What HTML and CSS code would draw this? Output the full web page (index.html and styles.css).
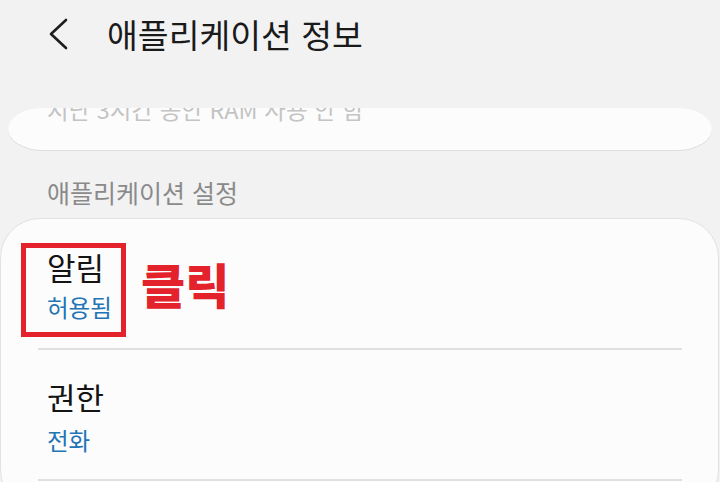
FILE: index.html
```html
<!DOCTYPE html>
<html lang="ko">
<head>
<meta charset="utf-8">
<link rel="stylesheet" href="styles.css">
</head>
<body>
<header class="appbar">
  <svg class="back" width="24" height="34" viewBox="0 0 24 34">
    <polyline points="19,3 4,17 19,31" fill="none" stroke="#1e1e1e" stroke-width="2.6" stroke-linecap="round" stroke-linejoin="round"/>
  </svg>
  <h1 class="title">애플리케이션 정보</h1>
</header>
<div class="prevcard">
  <p class="prevtext">지난 3시간 동안 RAM 사용 안 함</p>
</div>
<div class="section-label">애플리케이션 설정</div>
<div class="card">
  <div class="item item-first">
    <div class="item-title">알림</div>
    <div class="item-sub">허용됨</div>
  </div>
  <div class="divider"></div>
  <div class="item item-second">
    <div class="item-title">권한</div>
    <div class="item-sub sub-second">전화</div>
  </div>
  <div class="divider"></div>
  <div class="highlight"></div>
  <div class="click-label">클릭</div>
</div>
</body>
</html>
```
FILE: styles.css
```css
html, body {
  margin: 0;
  padding: 0;
}
body {
  width: 720px;
  height: 482px;
  overflow: hidden;
  background: #f2f2f2;
  font-family: "Noto Sans CJK KR", "Noto Sans", sans-serif;
  color: #141414;
}
.appbar {
  display: flex;
  align-items: center;
  height: 68px;
  padding-left: 47px;
}
.back {
  display: block;
}
.title {
  margin: 0 0 0 36px;
  font-size: 33.5px;
  font-weight: 400;
  line-height: 40px;
  color: #1a1a1a;
}
.prevcard {
  margin: 40px 8px 0 8px;
  height: 42px;
  background: #fcfcfc;
  border-radius: 35px / 21px;
  box-shadow: 0 1px 0 #dedede;
  overflow: hidden;
}
.prevtext {
  margin: -14px 0 0 39px;
  font-size: 23.5px;
  line-height: 30px;
  color: #c4c4c4;
  white-space: nowrap;
}
.section-label {
  margin: 27px 0 0 47px;
  font-size: 25px;
  line-height: 30px;
  color: #8a8a8a;
}
.card {
  position: relative;
  margin: 11px 1px 0 0;
  height: 290px;
  background: #fcfcfc;
  border: 1px solid #e2e2e2;
  border-radius: 40px;
}
.item {
  padding-left: 46px;
}
.item-first {
  padding-top: 30px;
  padding-bottom: 26px;
}
.item-second {
  padding-top: 29px;
  padding-bottom: 24px;
}
.item-title {
  font-size: 31px;
  line-height: 36px;
  color: #141414;
}
.item-sub {
  margin-top: 7px;
  font-size: 23.5px;
  line-height: 30px;
  color: #2274b5;
}
.sub-second {
  margin-top: 10px;
}
.divider {
  height: 2px;
  margin: 0 36px 0 37px;
  background: #e0e0e0;
}
.highlight {
  position: absolute;
  left: 20px;
  top: 24px;
  width: 95px;
  height: 84px;
  border: 5px solid #e3222b;
}
.click-label {
  position: absolute;
  left: 140px;
  top: 39px;
  font-size: 48px;
  line-height: 50px;
  font-weight: 900;
  color: #e3222b;
}
```
